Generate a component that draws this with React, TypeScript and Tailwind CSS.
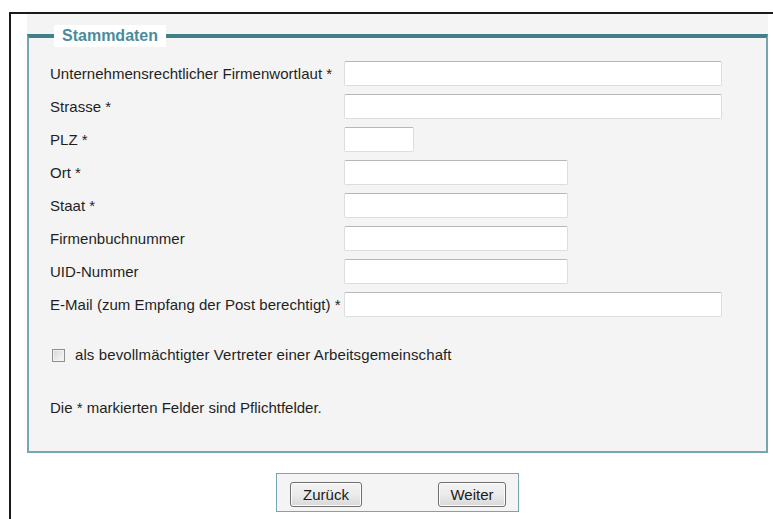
import React from 'react';

type Field = { label: string; width: string };

const fields: Field[] = [
  { label: 'Unternehmensrechtlicher Firmenwortlaut *', width: 'w-[378px]' },
  { label: 'Strasse *', width: 'w-[378px]' },
  { label: 'PLZ *', width: 'w-[70px]' },
  { label: 'Ort *', width: 'w-[224px]' },
  { label: 'Staat *', width: 'w-[224px]' },
  { label: 'Firmenbuchnummer', width: 'w-[224px]' },
  { label: 'UID-Nummer', width: 'w-[224px]' },
  { label: 'E-Mail (zum Empfang der Post berechtigt) *', width: 'w-[378px]' },
];

const Button: React.FC<{ label: string; width: string }> = ({ label, width }) => (
  <button
    type="button"
    className={`${width} h-[25px] rounded-[3px] border border-[#707070] bg-linear-to-b from-[#f3f3f3] via-[#ebebeb] to-[#d8d8d8] shadow-[inset_0_0_0_1px_#fbfbfb] text-[15px] leading-none text-[#1a1a1a]`}
  >
    {label}
  </button>
);

const App: React.FC = () => {
  return (
    <div className="min-h-screen bg-white pt-[12px] pl-[9px] font-['Liberation_Sans',Arial,sans-serif] text-[15px] text-[#1f1f1f]">
      <div className="min-h-[507px] border-l-2 border-t-2 border-[#1a1a1a] pl-[16px] pr-[5px]">
        <div className="bg-[#f4f4f4] pt-[11px]">
          <fieldset className="border-2 border-[#76a6ae] border-t-4 border-t-[#3f8089] px-[21px] pt-[14px] pb-[34px]">
            <legend className="ml-[4px] bg-white px-[8px] text-[16px] font-bold leading-[22px] text-[#4b8b9b]">
              Stammdaten
            </legend>

            <div className="grid grid-cols-[294px_1fr] items-center gap-y-[8px]">
              {fields.map((f) => (
                <React.Fragment key={f.label}>
                  <label className="whitespace-nowrap leading-[18px] tracking-[0.03px]">{f.label}</label>
                  <input
                    type="text"
                    className={`${f.width} h-[25px] rounded-[2px] border border-[#dcdde3] border-t-[#b6b7bc] bg-white px-1 outline-none`}
                  />
                </React.Fragment>
              ))}
            </div>

            <div className="mt-[28px] flex h-[20px] items-center gap-[10px] pl-[2px]">
              <span className="h-[13px] w-[13px] border border-[#8e8f8f] bg-linear-to-br from-[#d6d6d6] to-[#fafafa] shadow-[inset_0_0_0_1px_#f2f2f2]" />
              <span className="leading-[18px] tracking-[0.1px]">als bevollmächtigter Vertreter einer Arbeitsgemeinschaft</span>
            </div>

            <p className="mt-[34px] leading-[18px]">Die * markierten Felder sind Pflichtfelder.</p>
          </fieldset>
        </div>

        <div className="mx-auto mt-[20px] flex h-[39px] w-[243px] items-start justify-between border border-[#76a6ae] bg-[#f4f4f4] pl-[13px] pr-[12px] pt-[8px]">
          <Button label="Zurück" width="w-[72px]" />
          <Button label="Weiter" width="w-[68px]" />
        </div>
      </div>
    </div>
  );
};

export default App;
